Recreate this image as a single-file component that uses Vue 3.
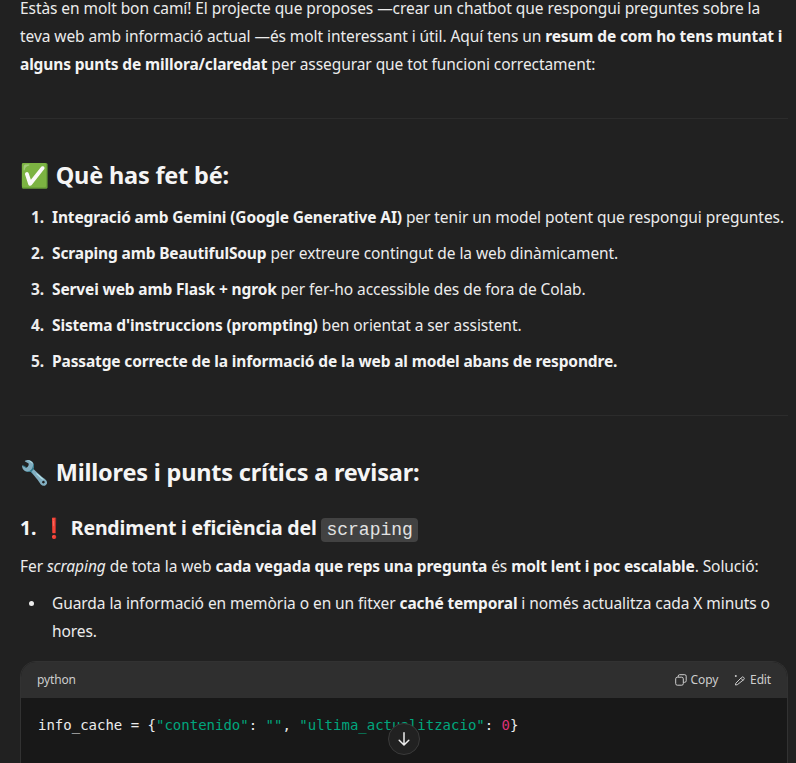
<script setup>
const items = [
  { b: 'Integració amb Gemini (Google Generative AI)', t: ' per tenir un model potent que respongui preguntes.' },
  { b: 'Scraping amb BeautifulSoup', t: ' per extreure contingut de la web dinàmicament.' },
  { b: 'Servei web amb Flask + ngrok', t: ' per fer-ho accessible des de fora de Colab.' },
  { b: "Sistema d'instruccions (prompting)", t: ' ben orientat a ser assistent.' },
  { b: 'Passatge correcte de la informació de la web al model abans de respondre.', t: '' }
]
</script>

<template>
  <div class="page">
    <main class="content">
      <p class="intro">Estàs en molt bon camí! El projecte que proposes —crear un chatbot que respongui preguntes sobre la teva web amb informació actual —és molt interessant i útil. Aquí tens un <strong>resum de com ho tens muntat i alguns punts de millora/claredat</strong> per assegurar que tot funcioni correctament:</p>
      <hr class="rule" />
      <h2 class="h2"><span class="emoji">✅</span> Què has fet bé:</h2>
      <ol class="steps">
        <li v-for="item in items" :key="item.b"><strong>{{ item.b }}</strong>{{ item.t }}</li>
      </ol>
      <hr class="rule" />
      <h2 class="h2"><span class="emoji">🔧</span> Millores i punts crítics a revisar:</h2>
      <h3 class="h3">1. <span class="emoji">❗</span> Rendiment i eficiència del <code class="inline">scraping</code></h3>
      <p class="para">Fer <em>scraping</em> de tota la web <strong>cada vegada que reps una pregunta</strong> és <strong>molt lent i poc escalable</strong>. Solució:</p>
      <ul class="bullets">
        <li>Guarda la informació en memòria o en un fitxer <strong>caché temporal</strong> i només actualitza cada X minuts o hores.</li>
      </ul>
      <section class="code">
        <header class="code-head">
          <span class="lang">python</span>
          <div class="actions">
            <span class="action">
              <svg width="12" height="12" viewBox="0 0 12 12" fill="none" stroke="currentColor" stroke-width="1"><rect x="0.7" y="3.2" width="7.6" height="8" rx="1.6"/><path d="M3.2 3V2.2A1.5 1.5 0 0 1 4.7 .7h5A1.5 1.5 0 0 1 11.2 2.2v4.6A1.5 1.5 0 0 1 9.7 8.3h-1.300"/></svg>
              Copy
            </span>
            <span class="action">
              <svg width="12" height="12" viewBox="0 0 12 12" fill="none" stroke="currentColor" stroke-width="1"><path d="M3.300 10.700 1.500 11l.3-1.800 5.700-5.700a1.500 1.500 0 0 1 2.300 2.100z"/><path d="M6.800 4.200l2.200 2.200"/><circle cx="1.800" cy="2" r="1" fill="currentColor" stroke="none"/></svg>
              Edit
            </span>
          </div>
        </header>
        <pre class="code-body"><code>info_cache = <span class="brace">{</span><span class="str">"contenido"</span>: <span class="str">""</span>, <span class="str">"ultima_actualitzacio"</span>: <span class="num">0</span><span class="brace2">}</span></code></pre>
      </section>
    </main>
    <button class="down" aria-label="Scroll down">
      <svg width="16" height="16" viewBox="0 0 16 16" fill="none" stroke="#ececec" stroke-width="1.500" stroke-linecap="round" stroke-linejoin="round"><path d="M8 1.800v12M3.200 9.200 8 14l4.800-4.800"/></svg>
    </button>
  </div>
</template>

<style>
html, body { margin: 0; background: #212121; }
</style>

<style scoped>
.page {
  position: relative;
  height: 763px;
  width: 796px;
  overflow: hidden;
  background: #212121;
  color: #ececec;
  font-family: "Noto Sans", "Open Sans", sans-serif;
  font-size: 15.5px;
  letter-spacing: -0.07px;
  line-height: 28px;
}
.content { margin-top: -6px; padding: 0 8px 0 20px; }
p { margin: 0; }
strong { font-weight: 700; letter-spacing: -0.14px; color: #f3f3f3; }
.rule { border: 0; border-top: 1px solid #2c2c2c; margin: 40px 0 0; }
.h2 { margin: 40px 0 0; font-size: 23.5px; letter-spacing: -0.2px; line-height: 32px; font-weight: 700; color: #f5f5f5; }
.h2 .emoji { margin-right: 1px; }
.steps { margin: 12px 0 0; padding: 0 0 0 32px; }
.steps li { margin-bottom: 8px; }
.steps li::marker { content: counter(list-item) ".\00a0\00a0"; font-weight: 700; }
.steps + .rule { margin-top: 40px; }
.h3 { margin: 24px 0 0; font-size: 19.5px; letter-spacing: -0.19px; line-height: 32px; font-weight: 700; color: #f5f5f5; }
.h3 .emoji { margin-left: 1px; }
.inline {
  font-family: "Liberation Mono", monospace;
  font-size: 18px;
  letter-spacing: 0;
  font-weight: 400;
  background: #424242;
  border-radius: 4px;
  padding: 2px 5px;
  color: #e2e2e2;
}
.para { margin-top: 6px; }
.bullets { margin: 9px 0 0; padding: 0 0 0 32px; list-style: none; }
.bullets li { position: relative; }
.bullets li::before {
  content: "";
  position: absolute;
  left: -23px;
  top: 12px;
  width: 5px;
  height: 5px;
  border-radius: 50%;
  background: #ececec;
}
.code { margin-top: 16px; border-radius: 16px 16px 0 0; overflow: hidden; border: 1px solid #323232; border-bottom: 0; background: #181818; }
.code-head { height: 36px; display: flex; align-items: center; justify-content: space-between; padding: 0 16px; background: #2f2f2f; font-size: 12px; letter-spacing: -0.15px; color: #cdcdcd; }
.actions { display: flex; gap: 16px; }
.action { display: flex; align-items: center; gap: 4px; }
.code-body { margin: 0; padding: 13px 17px 60px; font-family: "Liberation Mono", monospace; font-size: 14px; letter-spacing: 0; line-height: 28px; color: #ececec; }
.str { color: #00a67d; }
.num { color: #df3079; }
.brace { color: #ececec; }
.brace2 { color: #ececec; }
.down {
  position: absolute;
  left: 388px;
  top: 723px;
  width: 32px;
  height: 32px;
  padding: 0;
  display: flex;
  align-items: center;
  justify-content: center;
  border-radius: 50%;
  background: #212121;
  border: 1px solid #3a3a3a;
}
</style>
